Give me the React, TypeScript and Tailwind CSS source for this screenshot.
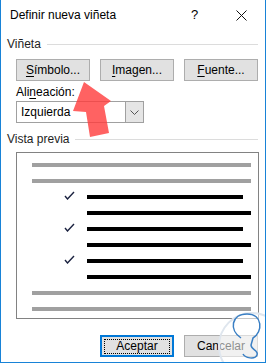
import React from 'react'

const font = { fontFamily: '"Liberation Sans", Arial, sans-serif' }

function Btn({ children, focused }: { children: React.ReactNode; focused?: boolean }) {
  return (
    <div
      className={
        'w-[74px] h-[22px] flex items-center justify-center bg-[#e1e1e1] text-[12px] text-black ' +
        (focused ? 'border-2 border-[#0078d7]' : 'border border-[#adadad]')
      }
    >
      {focused ? (
        <div className="w-[66px] h-[15px] flex items-center justify-center border border-dotted border-black">
          {children}
        </div>
      ) : (
        children
      )}
    </div>
  )
}

function SectionHead({ label }: { label: string }) {
  return (
    <div className="flex items-center h-[16px] pl-[6px] pr-[7px]">
      <span className="text-[12px] text-[#1e1e1e]">{label}</span>
      <div className="flex-1 h-px bg-[#dcdcdc] ml-[6px]" />
    </div>
  )
}

function Check() {
  return (
    <svg width="11" height="9" viewBox="0 0 11 9" className="shrink-0">
      <path d="M1 5 L3.5 8 L10 1" fill="none" stroke="#1b2240" strokeWidth="1.4" />
    </svg>
  )
}

function GrayLine() {
  return <div className="w-[219px] h-[4px] bg-[#a0a0a0]" />
}

function BlackLine({ short, check }: { short?: boolean; check?: boolean }) {
  return (
    <div className="flex items-end h-[4px]">
      <div className="w-[55px] flex justify-end pr-[12px] mb-[-1px]">{check && <Check />}</div>
      <div className={(short ? 'w-[156px]' : 'w-[164px]') + ' h-[4px] bg-black'} />
    </div>
  )
}

export default function App() {
  return (
    <div
      className="relative w-[266px] h-[363px] bg-white border-l border-r border-b border-[#1883d7] overflow-hidden"
      style={font}
    >
      {/* title bar */}
      <div className="flex items-center h-[30px] pl-[9px] text-[12px] text-black">
        <span className="flex-1">Definir nueva viñeta</span>
        <span className="w-[10px] text-[13px] mr-[35px]">?</span>
        <svg width="11" height="11" viewBox="0 0 11 11" className="mr-[18px]">
          <path d="M0.5 0.5 L10.5 10.5 M10.5 0.5 L0.5 10.5" stroke="#111" strokeWidth="1" />
        </svg>
      </div>

      <div className="mt-[6px]">
        <SectionHead label="Viñeta" />
      </div>

      <div className="pl-[15px] pr-[7px] mt-[7px] flex gap-[10px]">
        <Btn>
          <span>
            <u className="underline-offset-2">S</u>ímbolo...
          </span>
        </Btn>
        <Btn>
          <span>
            <u className="underline-offset-2">I</u>magen...
          </span>
        </Btn>
        <Btn>
          <span>
            <u className="underline-offset-2">F</u>uente...
          </span>
        </Btn>
      </div>

      <div className="pl-[15px] mt-[3px] h-[16px] flex items-center text-[12px] text-black">
        <span>
          Ali<u className="underline-offset-2">n</u>eación:
        </span>
      </div>

      <div className="ml-[15px] mt-px w-[128px] h-[22px] flex border border-[#a0a0a0] text-[12px] text-black">
        <div className="flex-1 flex items-center pl-[4px]">Izquierda</div>
        <div className="w-[18px] flex items-center justify-center bg-[#e5e5e5] border-l border-[#a0a0a0]">
          <svg width="9" height="5" viewBox="0 0 9 5">
            <path d="M0.5 0.5 L4.5 4.5 L8.5 0.5" fill="none" stroke="#555" strokeWidth="1" />
          </svg>
        </div>
      </div>

      <div className="mt-[8px]">
        <SectionHead label="Vista previa" />
      </div>

      <div className="ml-[15px] mt-[5px] w-[243px] h-[167px] border border-[#828282] pl-[15px] pt-[10px] flex flex-col gap-[12px]">
        <GrayLine />
        <GrayLine />
        <BlackLine short check />
        <BlackLine />
        <BlackLine short check />
        <BlackLine />
        <BlackLine short check />
        <BlackLine />
        <GrayLine />
        <GrayLine />
      </div>

      <div className="mt-[16px] pr-[7px] flex justify-end gap-[10px]">
        <Btn focused>Aceptar</Btn>
        <Btn>Cancelar</Btn>
      </div>

      {/* annotation arrow overlay */}
      <svg className="absolute left-0 top-0 pointer-events-none" width="266" height="363">
        <polygon
          points="83,82 110,101 103,106 108,133 89,137 85,112 72,111"
          fill="#ff3b3b"
          opacity="0.8"
        />
      </svg>

      {/* watermark */}
      <svg className="absolute left-0 top-0 pointer-events-none" width="266" height="363">
        <circle cx="251" cy="346" r="33" fill="#ffffff" fillOpacity="0.55" stroke="#dfe6ee" strokeWidth="2" />
        <path
          d="M240 338 C228 330 230 314 246 314 C262 314 262 332 252 338 L250 345 C250 350 258 350 256 355 C254 360 244 358 242 354"
          fill="none"
          stroke="#3a7fc4"
          strokeWidth="1.5"
        />
      </svg>
    </div>
  )
}
